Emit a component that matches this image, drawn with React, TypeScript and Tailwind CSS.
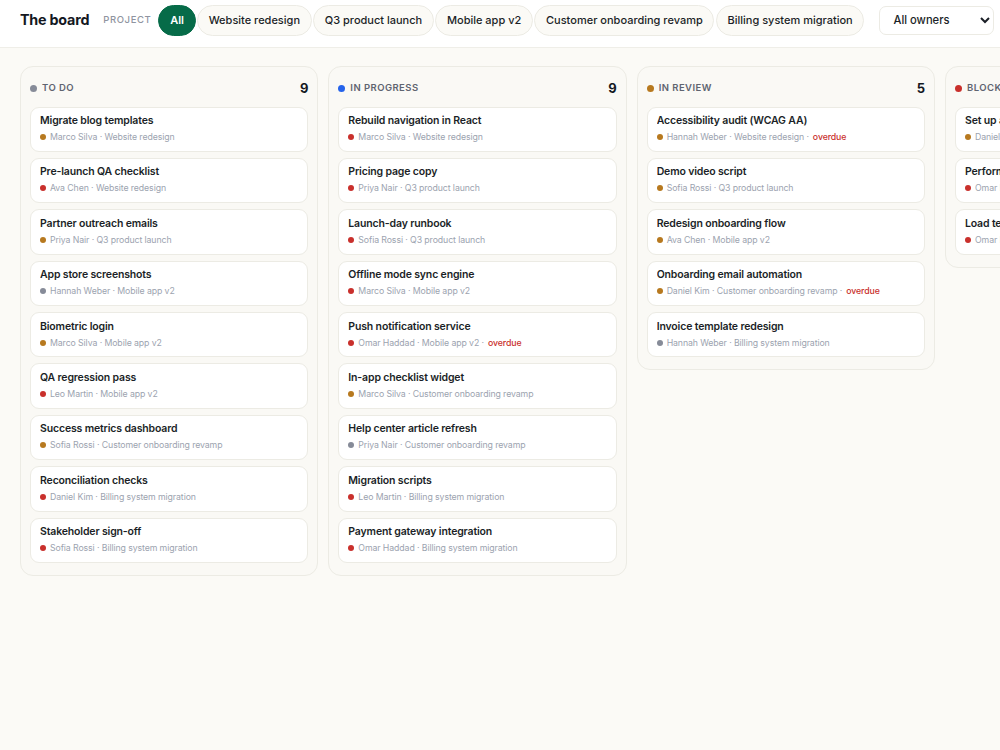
const projects = ['All', 'Website redesign', 'Q3 product launch', 'Mobile app v2', 'Customer onboarding revamp', 'Billing system migration']

type Task = { title: string; owner: string; project: string; dot: 'amber' | 'red' | 'gray'; overdue?: boolean }

const dots = { amber: 'bg-[#b7791f]', red: 'bg-[#c9302c]', gray: 'bg-[#868b98]' }

const columns: { name: string; color: string; tasks: Task[] }[] = [
  {
    name: 'TO DO',
    color: 'bg-[#868b98]',
    tasks: [
      { title: 'Migrate blog templates', owner: 'Marco Silva', project: 'Website redesign', dot: 'amber' },
      { title: 'Pre-launch QA checklist', owner: 'Ava Chen', project: 'Website redesign', dot: 'red' },
      { title: 'Partner outreach emails', owner: 'Priya Nair', project: 'Q3 product launch', dot: 'amber' },
      { title: 'App store screenshots', owner: 'Hannah Weber', project: 'Mobile app v2', dot: 'gray' },
      { title: 'Biometric login', owner: 'Marco Silva', project: 'Mobile app v2', dot: 'amber' },
      { title: 'QA regression pass', owner: 'Leo Martin', project: 'Mobile app v2', dot: 'red' },
      { title: 'Success metrics dashboard', owner: 'Sofia Rossi', project: 'Customer onboarding revamp', dot: 'amber' },
      { title: 'Reconciliation checks', owner: 'Daniel Kim', project: 'Billing system migration', dot: 'red' },
      { title: 'Stakeholder sign-off', owner: 'Sofia Rossi', project: 'Billing system migration', dot: 'red' },
    ],
  },
  {
    name: 'IN PROGRESS',
    color: 'bg-[#2563eb]',
    tasks: [
      { title: 'Rebuild navigation in React', owner: 'Marco Silva', project: 'Website redesign', dot: 'red' },
      { title: 'Pricing page copy', owner: 'Priya Nair', project: 'Q3 product launch', dot: 'red' },
      { title: 'Launch-day runbook', owner: 'Sofia Rossi', project: 'Q3 product launch', dot: 'red' },
      { title: 'Offline mode sync engine', owner: 'Marco Silva', project: 'Mobile app v2', dot: 'red' },
      { title: 'Push notification service', owner: 'Omar Haddad', project: 'Mobile app v2', dot: 'red', overdue: true },
      { title: 'In-app checklist widget', owner: 'Marco Silva', project: 'Customer onboarding revamp', dot: 'amber' },
      { title: 'Help center article refresh', owner: 'Priya Nair', project: 'Customer onboarding revamp', dot: 'gray' },
      { title: 'Migration scripts', owner: 'Leo Martin', project: 'Billing system migration', dot: 'red' },
      { title: 'Payment gateway integration', owner: 'Omar Haddad', project: 'Billing system migration', dot: 'red' },
    ],
  },
  {
    name: 'IN REVIEW',
    color: 'bg-[#b7791f]',
    tasks: [
      { title: 'Accessibility audit (WCAG AA)', owner: 'Hannah Weber', project: 'Website redesign', dot: 'amber', overdue: true },
      { title: 'Demo video script', owner: 'Sofia Rossi', project: 'Q3 product launch', dot: 'amber' },
      { title: 'Redesign onboarding flow', owner: 'Ava Chen', project: 'Mobile app v2', dot: 'amber' },
      { title: 'Onboarding email automation', owner: 'Daniel Kim', project: 'Customer onboarding revamp', dot: 'amber', overdue: true },
      { title: 'Invoice template redesign', owner: 'Hannah Weber', project: 'Billing system migration', dot: 'gray' },
    ],
  },
  {
    name: 'BLOCKED',
    color: 'bg-[#c9302c]',
    tasks: [
      { title: 'Set up analytics', owner: 'Daniel Kim', project: 'Q3 product launch', dot: 'amber' },
      { title: 'Performance audit', owner: 'Omar Haddad', project: 'Website redesign', dot: 'red' },
      { title: 'Load testing', owner: 'Omar Haddad', project: 'Billing system migration', dot: 'red' },
    ],
  },
]

function TaskCard({ task }: { task: Task }) {
  return (
    <div className="h-[45.4px] rounded-[9px] border border-[#ecebe4] bg-white px-[9px] pt-[6.5px]">
      <p className="truncate text-[10.5px] leading-[14px] font-semibold tracking-[-0.15px] text-[#1b1f27]">{task.title}</p>
      <div className="mt-[2px] flex items-center text-[8.75px] leading-[14px] tracking-[-0.1px] whitespace-nowrap text-[#9ca3af]">
        <span className={`mr-[4px] h-[6px] w-[6px] shrink-0 rounded-full ${dots[task.dot]}`} />
        <span>{task.owner} · {task.project}{task.overdue ? ' · ' : ''}</span>
        {task.overdue && <span className="ml-[4px] font-medium text-[#c9302c]">overdue</span>}
      </div>
    </div>
  )
}

export default function App() {
  return (
    <div className="h-[750px] w-[1000px] overflow-hidden bg-[#fbfaf6] font-['Inter',sans-serif]">
      <header className="flex h-[48px] items-center border-b border-[#efeee8] bg-white pb-[7px] pl-[20px]">
        <h1 className="mr-[14px] text-[14.3px] font-bold tracking-[-0.2px] whitespace-nowrap text-[#14181f]">The board</h1>
        <span className="mr-[7px] text-[9.5px] font-medium tracking-[0.6px] text-[#8f94a0]">PROJECT</span>
        <div className="flex shrink-0 gap-[1.25px]">
          {projects.map((p, i) => (
            <button
              key={p}
              className={
                i === 0
                  ? 'h-[31px] rounded-full border border-[#066b48] bg-[#066b48] px-[10.75px] text-[11px] font-semibold whitespace-nowrap text-white'
                  : 'h-[31px] rounded-full border border-[#ecebe4] bg-[#fbfaf6] px-[10.75px] text-[11px] font-medium whitespace-nowrap text-[#1b1f27]'
              }
            >
              {p}
            </button>
          ))}
        </div>
        <select className="ml-[15px] h-[29px] w-[115px] shrink-0 rounded-[7px] border border-[#ecebe4] bg-white pl-[9px] text-[11.2px] font-medium text-[#1b1f27]">
          <option>All owners</option>
        </select>
      </header>
      <main className="flex items-start gap-[10px] pt-[18px] pl-[20px]">
        {columns.map((col) => (
          <section key={col.name} className="w-[298.33px] shrink-0 rounded-[13px] border border-[#ecebe4] bg-[#faf9f5] px-[9px] pb-[12px]">
            <div className="flex h-[39.5px] items-center pt-[3px]">
              <span className={`mr-[5px] h-[7px] w-[7px] rounded-full ${col.color}`} />
              <span className="text-[9.5px] font-semibold tracking-[0.45px] text-[#5f6470]">{col.name}</span>
              <span className="ml-auto text-[13px] font-bold text-[#14181f]">{col.tasks.length}</span>
            </div>
            <div className="flex flex-col gap-[6px]">
              {col.tasks.map((t) => <TaskCard key={t.title} task={t} />)}
            </div>
          </section>
        ))}
      </main>
    </div>
  )
}
